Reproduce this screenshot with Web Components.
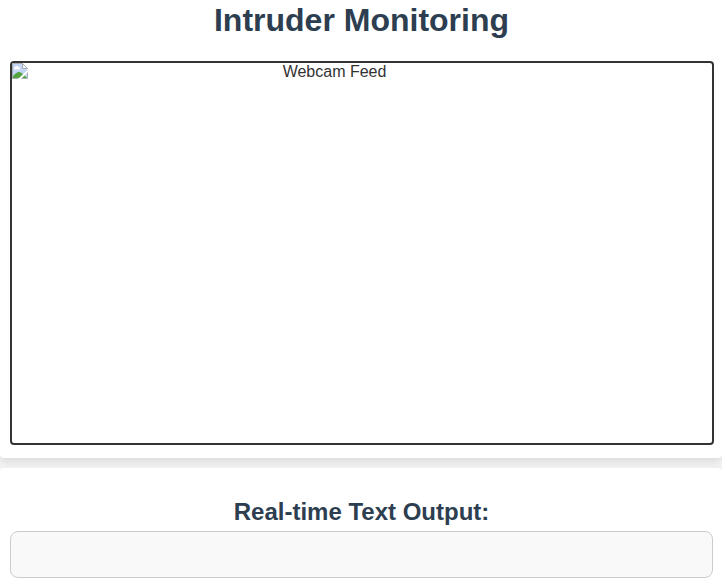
<!DOCTYPE html>
<html lang="en"><head><meta charset="utf-8"><title>Intruder Monitoring</title>
<style>
body{margin:0;height:585px;overflow:hidden;background:#f4f4f4;font-family:"Liberation Sans",Arial,sans-serif;color:#333}
</style></head><body>
<monitor-page></monitor-page>
<script>
const define=(name,html)=>customElements.define(name,class extends HTMLElement{
  constructor(){super();this.attachShadow({mode:'open'}).innerHTML=html;}
});
define('monitor-card',`<style>
:host{display:block;box-sizing:border-box;background:#fff;padding:0 9px 0 10px;border-radius:4px;box-shadow:0 4px 8px rgba(0,0,0,.1)}
</style><slot></slot>`);
define('monitor-heading',`<style>
:host{display:block;text-align:center;color:#2c3e50}
h1{margin:0;font-size:inherit;line-height:inherit;font-weight:bold}
</style><h1><slot></slot></h1>`);
define('webcam-feed',`<style>
:host{display:flex;box-sizing:border-box;height:384px;margin-right:-1px;border:2px solid #333;border-radius:4px;font-size:16px;line-height:18px}
svg{flex:none;width:16px;height:16px}
span{flex:1;text-align:center;padding-right:71px}
</style><svg viewBox="0 0 16 16"><path d="M.5.5h10l5 5v10H.5z" fill="#c3d5f5"/><path d="M2.500 6.500a1.500 1.500 0 0 1 .5-2.500 2 2 0 0 1 3.500 0 1.500 1.500 0 0 1 1 2.500z" fill="#fff"/><path d="M1 15v-2c2-2 4-4 6-4s4 2 8 6z" fill="#55a33f"/><path d="M16 6.500v2.500L9 16H6z" fill="#fff"/><path d="M.5 15.500V.5h10l5 5M.5 15.500h5.500M9.500 15.500h6V9.500" fill="none" stroke="#a9acb2"/><path d="M10.500.5v5h5z" fill="#f4f5f7" stroke="#a9acb2"/></svg><span><slot></slot></span>`);
define('text-output',`<style>
:host{display:block;box-sizing:border-box;height:47px;background:#f9f9f9;border:1px solid #ccc;border-radius:8px}
</style>`);
define('monitor-page',`<style>
:host{display:flex;flex-direction:column;gap:10px}
.feed{height:458px;border-radius:0 0 4px 4px}
.output{height:140px}
.title{font-size:32px;line-height:37px;padding:2px 0 22px}
.subtitle{font-size:24px;line-height:28px;padding:30px 0 5px}
</style><monitor-card class="feed"><monitor-heading class="title">Intruder Monitoring</monitor-heading><webcam-feed>Webcam Feed</webcam-feed></monitor-card>
<monitor-card class="output"><monitor-heading class="subtitle">Real-time Text Output:</monitor-heading><text-output></text-output></monitor-card>`);
</script></body></html>
